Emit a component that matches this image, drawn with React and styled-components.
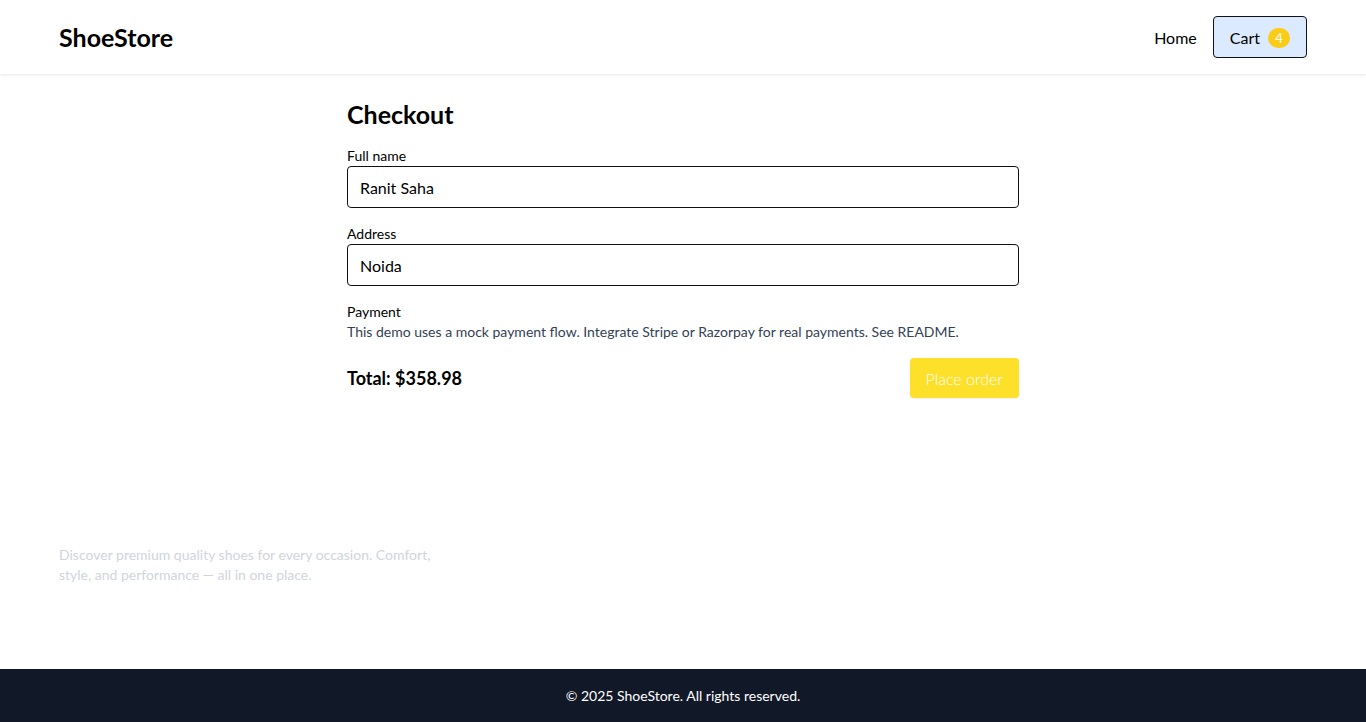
import React from 'react';
import styled, { createGlobalStyle } from 'styled-components';

const GlobalStyle = createGlobalStyle`
  * { box-sizing: border-box; }
  body {
    margin: 0;
    font-family: "Lato", "Open Sans", sans-serif;
    color: #000;
    background: #fff;
  }
`;

const Page = styled.div`
  min-height: 100vh;
  display: flex;
  flex-direction: column;
`;

const Header = styled.header`
  height: 74px;
  background: #fff;
  box-shadow: 0 1px 3px rgba(0, 0, 0, 0.1);
`;

const HeaderInner = styled.div`
  max-width: 1280px;
  height: 100%;
  margin: 0 auto;
  padding: 0 16px;
  display: flex;
  align-items: center;
  justify-content: space-between;
`;

const Logo = styled.div`
  font-size: 25px;
  font-weight: 700;
`;

const Nav = styled.nav`
  display: flex;
  align-items: center;
  gap: 16px;
`;

const NavLink = styled.a`
  font-size: 16px;
  color: #000;
  text-decoration: none;
`;

const CartButton = styled.a`
  display: flex;
  align-items: center;
  gap: 8px;
  height: 42px;
  padding: 0 16px;
  background: #dbeafe;
  border: 1px solid #111;
  border-radius: 4px;
  font-size: 16px;
  color: #000;
  text-decoration: none;
`;

const Badge = styled.span`
  width: 22px;
  height: 20px;
  margin-top: 2px;
  border-radius: 10px;
  background: #facc15;
  color: #fff;
  font-size: 13px;
  display: flex;
  align-items: center;
  justify-content: center;
`;

const Main = styled.main`
  flex: 1;
  width: 672px;
  margin: 0 auto;
  padding-top: 24px;
`;

const Title = styled.h1`
  margin: 0 0 16px;
  font-size: 25px;
  font-weight: 700;
  line-height: 32px;
`;

const Field = styled.div`
  margin-bottom: 16px;
`;

const Label = styled.label`
  display: block;
  font-size: 14px;
  line-height: 20px;
`;

const Input = styled.input`
  width: 100%;
  height: 42px;
  padding: 0 12px;
  border: 1px solid #111;
  border-radius: 4px;
  font-family: inherit;
  font-size: 16px;
  color: #000;
  outline: none;
`;

const Note = styled.p`
  margin: 0;
  font-size: 14px;
  line-height: 20px;
  color: #334155;
`;

const TotalRow = styled.div`
  margin-top: 16px;
  display: flex;
  align-items: center;
  justify-content: space-between;
`;

const Total = styled.div`
  font-size: 18px;
  font-weight: 700;
`;

const OrderButton = styled.button`
  height: 40px;
  padding: 0 16px;
  background: #fde02a;
  border: none;
  border-radius: 4px;
  box-shadow: 0 1px 2px rgba(0, 0, 0, 0.08);
  color: #fff;
  font-family: inherit;
  font-size: 16px;
  font-weight: 300;
`;

const Footer = styled.footer``;

const FooterTop = styled.div`
  max-width: 1280px;
  margin: 0 auto;
  padding: 38px 16px 84px;
`;

const About = styled.p`
  margin: 0;
  width: 380px;
  font-size: 14px;
  line-height: 20px;
  color: #d1d5db;
`;

const Bottom = styled.div`
  height: 53px;
  background: #111827;
  color: #fff;
  font-size: 14px;
  display: flex;
  align-items: center;
  justify-content: center;
`;

export default function App() {
  return (
    <Page>
      <GlobalStyle />
      <Header>
        <HeaderInner>
          <Logo>ShoeStore</Logo>
          <Nav>
            <NavLink href="#">Home</NavLink>
            <CartButton href="#">
              Cart <Badge>4</Badge>
            </CartButton>
          </Nav>
        </HeaderInner>
      </Header>
      <Main>
        <Title>Checkout</Title>
        <Field>
          <Label>Full name</Label>
          <Input defaultValue="Ranit Saha" />
        </Field>
        <Field>
          <Label>Address</Label>
          <Input defaultValue="Noida" />
        </Field>
        <Label as="div">Payment</Label>
        <Note>
          This demo uses a mock payment flow. Integrate Stripe or Razorpay for real payments. See README.
        </Note>
        <TotalRow>
          <Total>Total: $358.98</Total>
          <OrderButton>Place order</OrderButton>
        </TotalRow>
      </Main>
      <Footer>
        <FooterTop>
          <About>
            Discover premium quality shoes for every occasion. Comfort, style, and performance — all in one place.
          </About>
        </FooterTop>
        <Bottom>© 2025 ShoeStore. All rights reserved.</Bottom>
      </Footer>
    </Page>
  );
}
